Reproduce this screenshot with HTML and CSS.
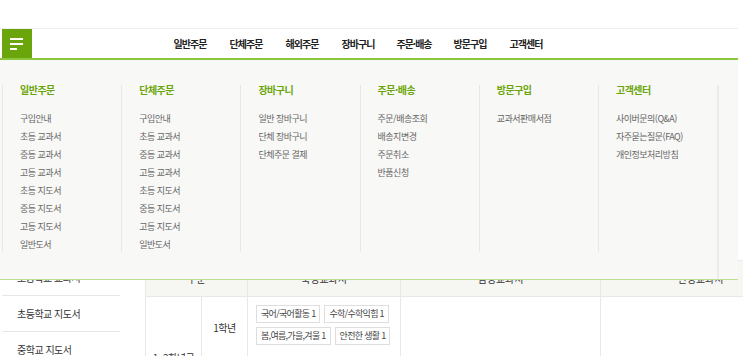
FILE: index.html
```html
<!DOCTYPE html>
<html lang="ko">
<head>
  <meta charset="UTF-8">
  <title>교과서 주문</title>
  <link rel="stylesheet" href="styles.css">
</head>
<body>
<div class="wrap">
  <div class="top"></div>

  <div class="header">
    <button class="menu-btn"><span></span><span></span><span class="short"></span></button>
    <ul class="gnb">
      <li>일반주문</li>
      <li>단체주문</li>
      <li>해외주문</li>
      <li>장바구니</li>
      <li>주문·배송</li>
      <li>방문구입</li>
      <li>고객센터</li>
    </ul>
  </div>

  <div class="all-menu">
    <div class="col">
      <h3>일반주문</h3>
      <ul>
        <li>구입안내</li>
        <li>초등 교과서</li>
        <li>중등 교과서</li>
        <li>고등 교과서</li>
        <li>초등 지도서</li>
        <li>중등 지도서</li>
        <li>고등 지도서</li>
        <li>일반도서</li>
      </ul>
    </div>
    <div class="col">
      <h3>단체주문</h3>
      <ul>
        <li>구입안내</li>
        <li>초등 교과서</li>
        <li>중등 교과서</li>
        <li>고등 교과서</li>
        <li>초등 지도서</li>
        <li>중등 지도서</li>
        <li>고등 지도서</li>
        <li>일반도서</li>
      </ul>
    </div>
    <div class="col">
      <h3>장바구니</h3>
      <ul>
        <li>일반 장바구니</li>
        <li>단체 장바구니</li>
        <li>단체주문 결제</li>
      </ul>
    </div>
    <div class="col">
      <h3>주문·배송</h3>
      <ul>
        <li>주문/배송조회</li>
        <li>배송지변경</li>
        <li>주문취소</li>
        <li>반품신청</li>
      </ul>
    </div>
    <div class="col">
      <h3>방문구입</h3>
      <ul>
        <li>교과서판매서점</li>
      </ul>
    </div>
    <div class="col">
      <h3>고객센터</h3>
      <ul>
        <li>사이버문의(Q&amp;A)</li>
        <li>자주묻는질문(FAQ)</li>
        <li>개인정보처리방침</li>
      </ul>
    </div>
    <div class="col-end"></div>
  </div>

  <div class="content">
    <ul class="side">
      <li>초등학교 교과서</li>
      <li>초등학교 지도서</li>
      <li>중학교 지도서</li>
    </ul>

    <table class="book-table">
      <colgroup>
        <col class="c1"><col class="c2"><col class="c3"><col class="c4"><col class="c5">
      </colgroup>
      <tr>
        <th colspan="2">구분</th>
        <th>국정교과서</th>
        <th>검정교과서</th>
        <th>인정교과서</th>
      </tr>
      <tr>
        <td rowspan="2">1~2학년군</td>
        <td>1학년</td>
        <td class="tags">
          <div class="tag-list">
            <span class="tag">국어/국어활동 1</span>
            <span class="tag">수학/수학익힘 1</span>
            <span class="tag">봄,여름,가을,겨울 1</span>
            <span class="tag">안전한 생활 1</span>
          </div>
        </td>
        <td></td>
        <td rowspan="2"></td>
      </tr>
      <tr>
        <td>2학년</td>
        <td></td>
        <td></td>
      </tr>
    </table>
  </div>
</div>
</body>
</html>
```

FILE: styles.css
```css
body {
  margin: 0;
  font-family: "Noto Sans CJK KR", "Noto Sans", sans-serif;
  color: #333;
  overflow: hidden;
}
ul {
  margin: 0;
  padding: 0;
  list-style: none;
}
.wrap {
  width: 738px;
  position: relative;
}
.top {
  height: 28px;
  border-bottom: 1px solid #eeeeee;
}

/* header */
.header {
  height: 29px;
  display: flex;
  border-bottom: 2px solid #8cc63f;
}
.menu-btn {
  width: 30px;
  margin-left: 2px;
  border: 0;
  padding: 0 0 0 8px;
  background-color: #6aa60b;
  display: flex;
  flex-direction: column;
  justify-content: center;
  gap: 3px;
}
.menu-btn span {
  display: block;
  width: 13px;
  height: 2px;
  background-color: #fff;
}
.menu-btn span.short {
  width: 7px;
}
.gnb {
  display: flex;
  margin-left: 130px;
}
.gnb li {
  width: 56px;
  text-align: center;
  line-height: 29px;
  font-size: 10px;
  font-weight: bold;
  letter-spacing: -1px;
  color: #222;
}

/* dropdown */
.all-menu {
  position: absolute;
  top: 60px;
  left: 0;
  width: 738px;
  height: 220px;
  box-sizing: border-box;
  padding: 25px 0 0 2px;
  display: flex;
  background-color: #f8f8f6;
  border-bottom: 1px solid #bddf95;
}
.col {
  width: 119.2px;
  height: 167px;
  box-sizing: border-box;
  padding-left: 17px;
  border-left: 1px solid #e8e8e3;
}
.col h3 {
  margin: 0 0 15px;
  font-size: 10px;
  line-height: 10px;
  letter-spacing: -0.5px;
  color: #6aa60b;
}
.col li {
  font-size: 9px;
  line-height: 18px;
  letter-spacing: -0.5px;
  color: #666;
}
.col-end {
  flex: 1;
  border-left: 2px solid #ecece7;
}

/* content under the menu */
.content {
  display: flex;
  padding-top: 200px;
}
.side {
  width: 118px;
  flex-shrink: 0;
  margin-left: 2px;
}
.side li {
  height: 36px;
  box-sizing: border-box;
  padding-left: 15px;
  line-height: 35px;
  font-size: 10px;
  letter-spacing: -0.5px;
  border-bottom: 1px solid #e6e6e6;
}
.book-table {
  margin-left: 25px;
  border-collapse: collapse;
  table-layout: fixed;
  width: 655px;
  flex-shrink: 0;
}
.c1 { width: 56px; }
.c2 { width: 46px; }
.c3 { width: 153px; }
.c4 { width: 200px; }
.c5 { width: 200px; }
.book-table th {
  height: 35px;
  padding: 0;
  font-size: 10px;
  font-weight: normal;
  background-color: #f6f6f3;
  border: 1px solid #e8e8e8;
}
.book-table td {
  height: 60px;
  padding: 0;
  font-size: 10px;
  text-align: center;
  letter-spacing: -0.5px;
  border: 1px solid #e8e8e8;
}
.book-table td.tags {
  height: 40px;
  padding: 8px 2px 11px 8px;
  text-align: left;
  vertical-align: top;
}
.tag-list {
  height: 40px;
  display: flex;
  flex-wrap: wrap;
  align-content: flex-start;
  gap: 4px;
}
.tag {
  height: 18px;
  box-sizing: border-box;
  padding: 0 4px;
  line-height: 16px;
  font-size: 9px;
  letter-spacing: -0.7px;
  color: #444;
  background-color: #fff;
  border: 1px solid #dedede;
}
```
